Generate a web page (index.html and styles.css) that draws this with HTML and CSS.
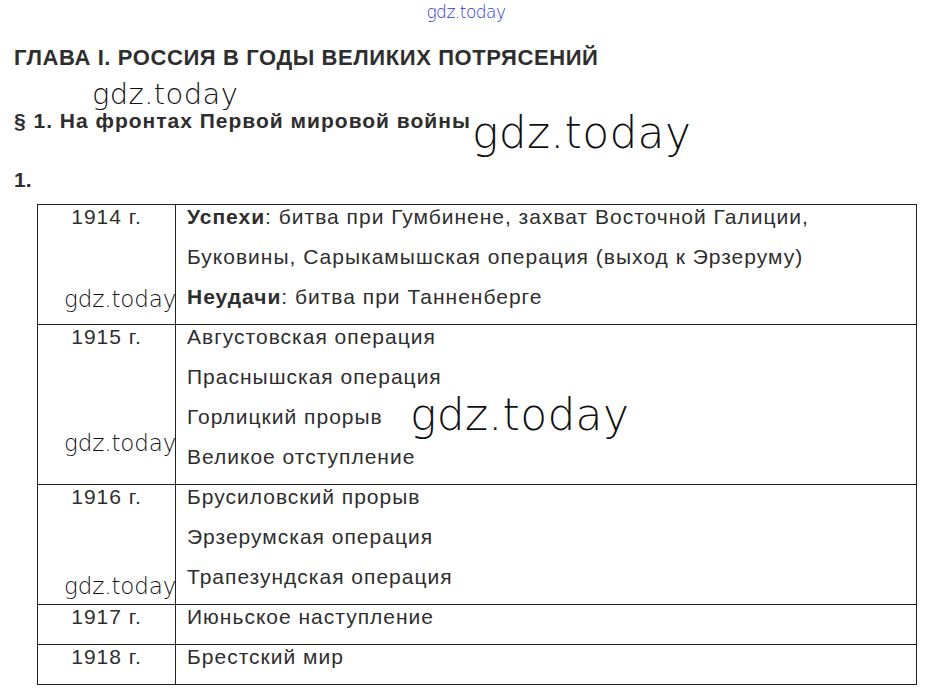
FILE: index.html
```html
<!DOCTYPE html>
<html lang="ru">
<head>
<meta charset="utf-8">
<title>ГДЗ</title>
<link rel="stylesheet" href="styles.css">
</head>
<body>
<div class="page">
  <div class="logo">gdz.today</div>
  <h1 class="chapter">ГЛАВА I. РОССИЯ В ГОДЫ ВЕЛИКИХ ПОТРЯСЕНИЙ</h1>
  <h2 class="section">§ 1. На фронтах Первой мировой войны</h2>
  <div class="num">1.</div>
  <table class="events">
    <tr class="r3">
      <td class="year"><div class="cell">1914 г.</div></td>
      <td class="text"><div class="cell"><b>Успехи</b>: битва при Гумбинене, захват Восточной Галиции,<br>Буковины, Сарыкамышская операция (выход к Эрзеруму)<br><b>Неудачи</b>: битва при Танненберге</div></td>
    </tr>
    <tr>
      <td class="year"><div class="cell">1915 г.</div></td>
      <td class="text"><div class="cell">Августовская операция<br>Праснышская операция<br>Горлицкий прорыв<br>Великое отступление</div></td>
    </tr>
    <tr>
      <td class="year"><div class="cell">1916 г.</div></td>
      <td class="text"><div class="cell">Брусиловский прорыв<br>Эрзерумская операция<br>Трапезундская операция</div></td>
    </tr>
    <tr>
      <td class="year"><div class="cell">1917 г.</div></td>
      <td class="text"><div class="cell">Июньское наступление</div></td>
    </tr>
    <tr>
      <td class="year"><div class="cell">1918 г.</div></td>
      <td class="text"><div class="cell">Брестский мир</div></td>
    </tr>
  </table>

  <div class="wm wm-m wm1">gdz.today</div>
  <div class="wm wm-l wm2">gdz.today</div>
  <div class="wm wm-s wm3">gdz.today</div>
  <div class="wm wm-l wm4">gdz.today</div>
  <div class="wm wm-s wm5">gdz.today</div>
  <div class="wm wm-s wm6">gdz.today</div>
</div>
</body>
</html>
```
FILE: styles.css
```css
html, body {
  margin: 0;
  padding: 0;
  background: #fff;
}
.page {
  position: relative;
  width: 929px;
  height: 699px;
  overflow: hidden;
  font-family: "Liberation Sans", Arial, sans-serif;
  color: #2e2e2e;
}
.logo {
  text-align: center;
  font-family: "DejaVu Sans", sans-serif;
  font-weight: 200;
  font-size: 17px;
  line-height: 24px;
  color: #2f35d6;
  padding-left: 3px;
  letter-spacing: -0.5px;
}
.chapter {
  margin: 20px 0 0 14px;
  font-size: 22px;
  line-height: 28px;
  font-weight: bold;
  letter-spacing: 0.6px;
}
.section {
  margin: 36px 0 0 14px;
  font-size: 21px;
  line-height: 26px;
  font-weight: bold;
  letter-spacing: 1px;
}
.num {
  margin: 33px 0 0 14px;
  font-size: 21px;
  line-height: 26px;
  font-weight: bold;
}
.events {
  margin: 11px 0 0 37px;
  width: 880px;
  border-collapse: collapse;
  font-size: 21px;
  line-height: 40px;
  letter-spacing: 1px;
}
.events td {
  border: 1px solid #222;
  padding: 0 0 7px 0;
  vertical-align: top;
}
.events .cell {
  margin-top: -8px;
}
.events .year {
  width: 137px;
  text-align: center;
}
.events .text {
  padding-left: 11px;
}
.events b {
  font-weight: bold;
}
.wm {
  position: absolute;
  font-family: "DejaVu Sans", sans-serif;
  font-weight: 200;
  color: #111;
  white-space: nowrap;
}
.wm-s { font-size: 23px; line-height: 26px; letter-spacing: -0.1px; }
.wm-m { font-size: 29px; line-height: 34px; letter-spacing: 0.4px; }
.wm-l { font-size: 44px; line-height: 50px; letter-spacing: 0.3px; }
.wm1 { left: 92px; top: 77px; }
.wm2 { left: 472px; top: 108px; }
.wm3 { left: 64px; top: 286px; }
.wm4 { left: 410px; top: 390px; }
.wm5 { left: 64px; top: 430px; }
.wm6 { left: 64px; top: 573px; }
```
